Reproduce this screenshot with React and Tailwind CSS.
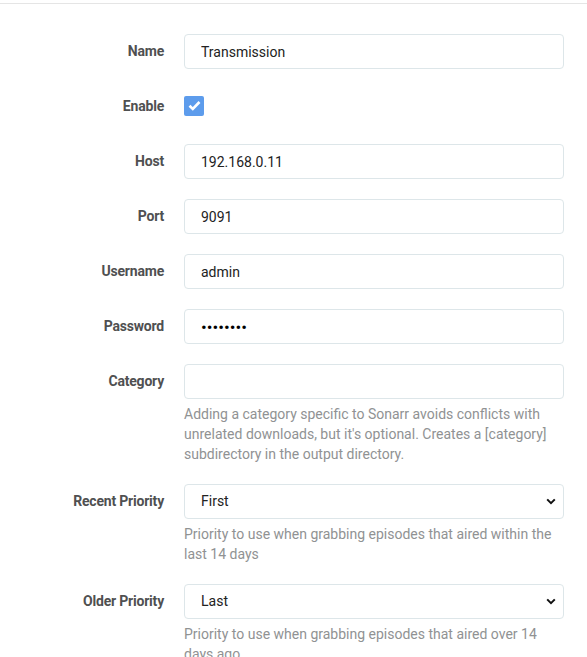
import React from "react";

const labelCls =
  "w-[164px] shrink-0 h-[35px] flex items-center justify-end text-[14px] font-bold text-[#4f5051] tracking-[-0.2px]";
const inputCls =
  "w-[380px] h-[35px] px-4 border border-[#dde6e9] rounded-[4px] bg-white text-[14px] text-[#222] outline-none";
const helpCls = "pt-[5px] w-[380px] text-[14px] leading-[20px] text-[#909293]";

const Row = ({ label, children, help }) => (
  <div className="flex gap-5 mb-5">
    <div className={labelCls}>{label}</div>
    <div className="flex flex-col">
      {children}
      {help && <div className={helpCls}>{help}</div>}
    </div>
  </div>
);

const Select = ({ value, options }) => (
  <div className="relative w-[380px]">
    <select
      defaultValue={value}
      className={inputCls + " appearance-none"}
    >
      {options.map((o) => (
        <option key={o}>{o}</option>
      ))}
    </select>
    <svg
      className="absolute right-[8px] top-[14px] pointer-events-none"
      width="10"
      height="7"
      viewBox="0 0 10 7"
    >
      <path d="M1.2 1.4 L5 5.2 L8.8 1.4" fill="none" stroke="#111" strokeWidth="2" />
    </svg>
  </div>
);

const App = () => {
  return (
    <div
      className="w-[587px] h-[657px] overflow-hidden bg-white"
      style={{ fontFamily: "Roboto, 'Liberation Sans', sans-serif" }}
    >
      <div className="mt-[3px] border-t border-[#e5e5e5] pt-[30px]">
        <Row label="Name">
          <input className={inputCls} defaultValue="Transmission" />
        </Row>

        <Row label="Enable">
          <div className="h-[35px] flex items-center">
            <span className="w-5 h-5 rounded-[2px] bg-[#5d9cec] flex items-center justify-center -mt-[2px]">
              <svg width="13" height="11" viewBox="0 0 13 11">
                <path
                  d="M1.5 5.8 L4.8 9 L11.5 2"
                  fill="none"
                  stroke="#fff"
                  strokeWidth="2.6"
                />
              </svg>
            </span>
          </div>
        </Row>

        <Row label="Host">
          <input className={inputCls} defaultValue="192.168.0.11" />
        </Row>

        <Row label="Port">
          <input className={inputCls} defaultValue="9091" />
        </Row>

        <Row label="Username">
          <input className={inputCls} defaultValue="admin" />
        </Row>

        <Row label="Password">
          <input
            type="password"
            className={inputCls + " text-[17px] text-black"}
            defaultValue="password"
          />
        </Row>

        <Row
          label="Category"
          help="Adding a category specific to Sonarr avoids conflicts with unrelated downloads, but it's optional. Creates a [category] subdirectory in the output directory."
        >
          <input className={inputCls} defaultValue="" />
        </Row>

        <Row
          label="Recent Priority"
          help="Priority to use when grabbing episodes that aired within the last 14 days"
        >
          <Select value="First" options={["First", "Last"]} />
        </Row>

        <Row
          label="Older Priority"
          help="Priority to use when grabbing episodes that aired over 14 days ago"
        >
          <Select value="Last" options={["First", "Last"]} />
        </Row>
      </div>
    </div>
  );
};

export default App;
